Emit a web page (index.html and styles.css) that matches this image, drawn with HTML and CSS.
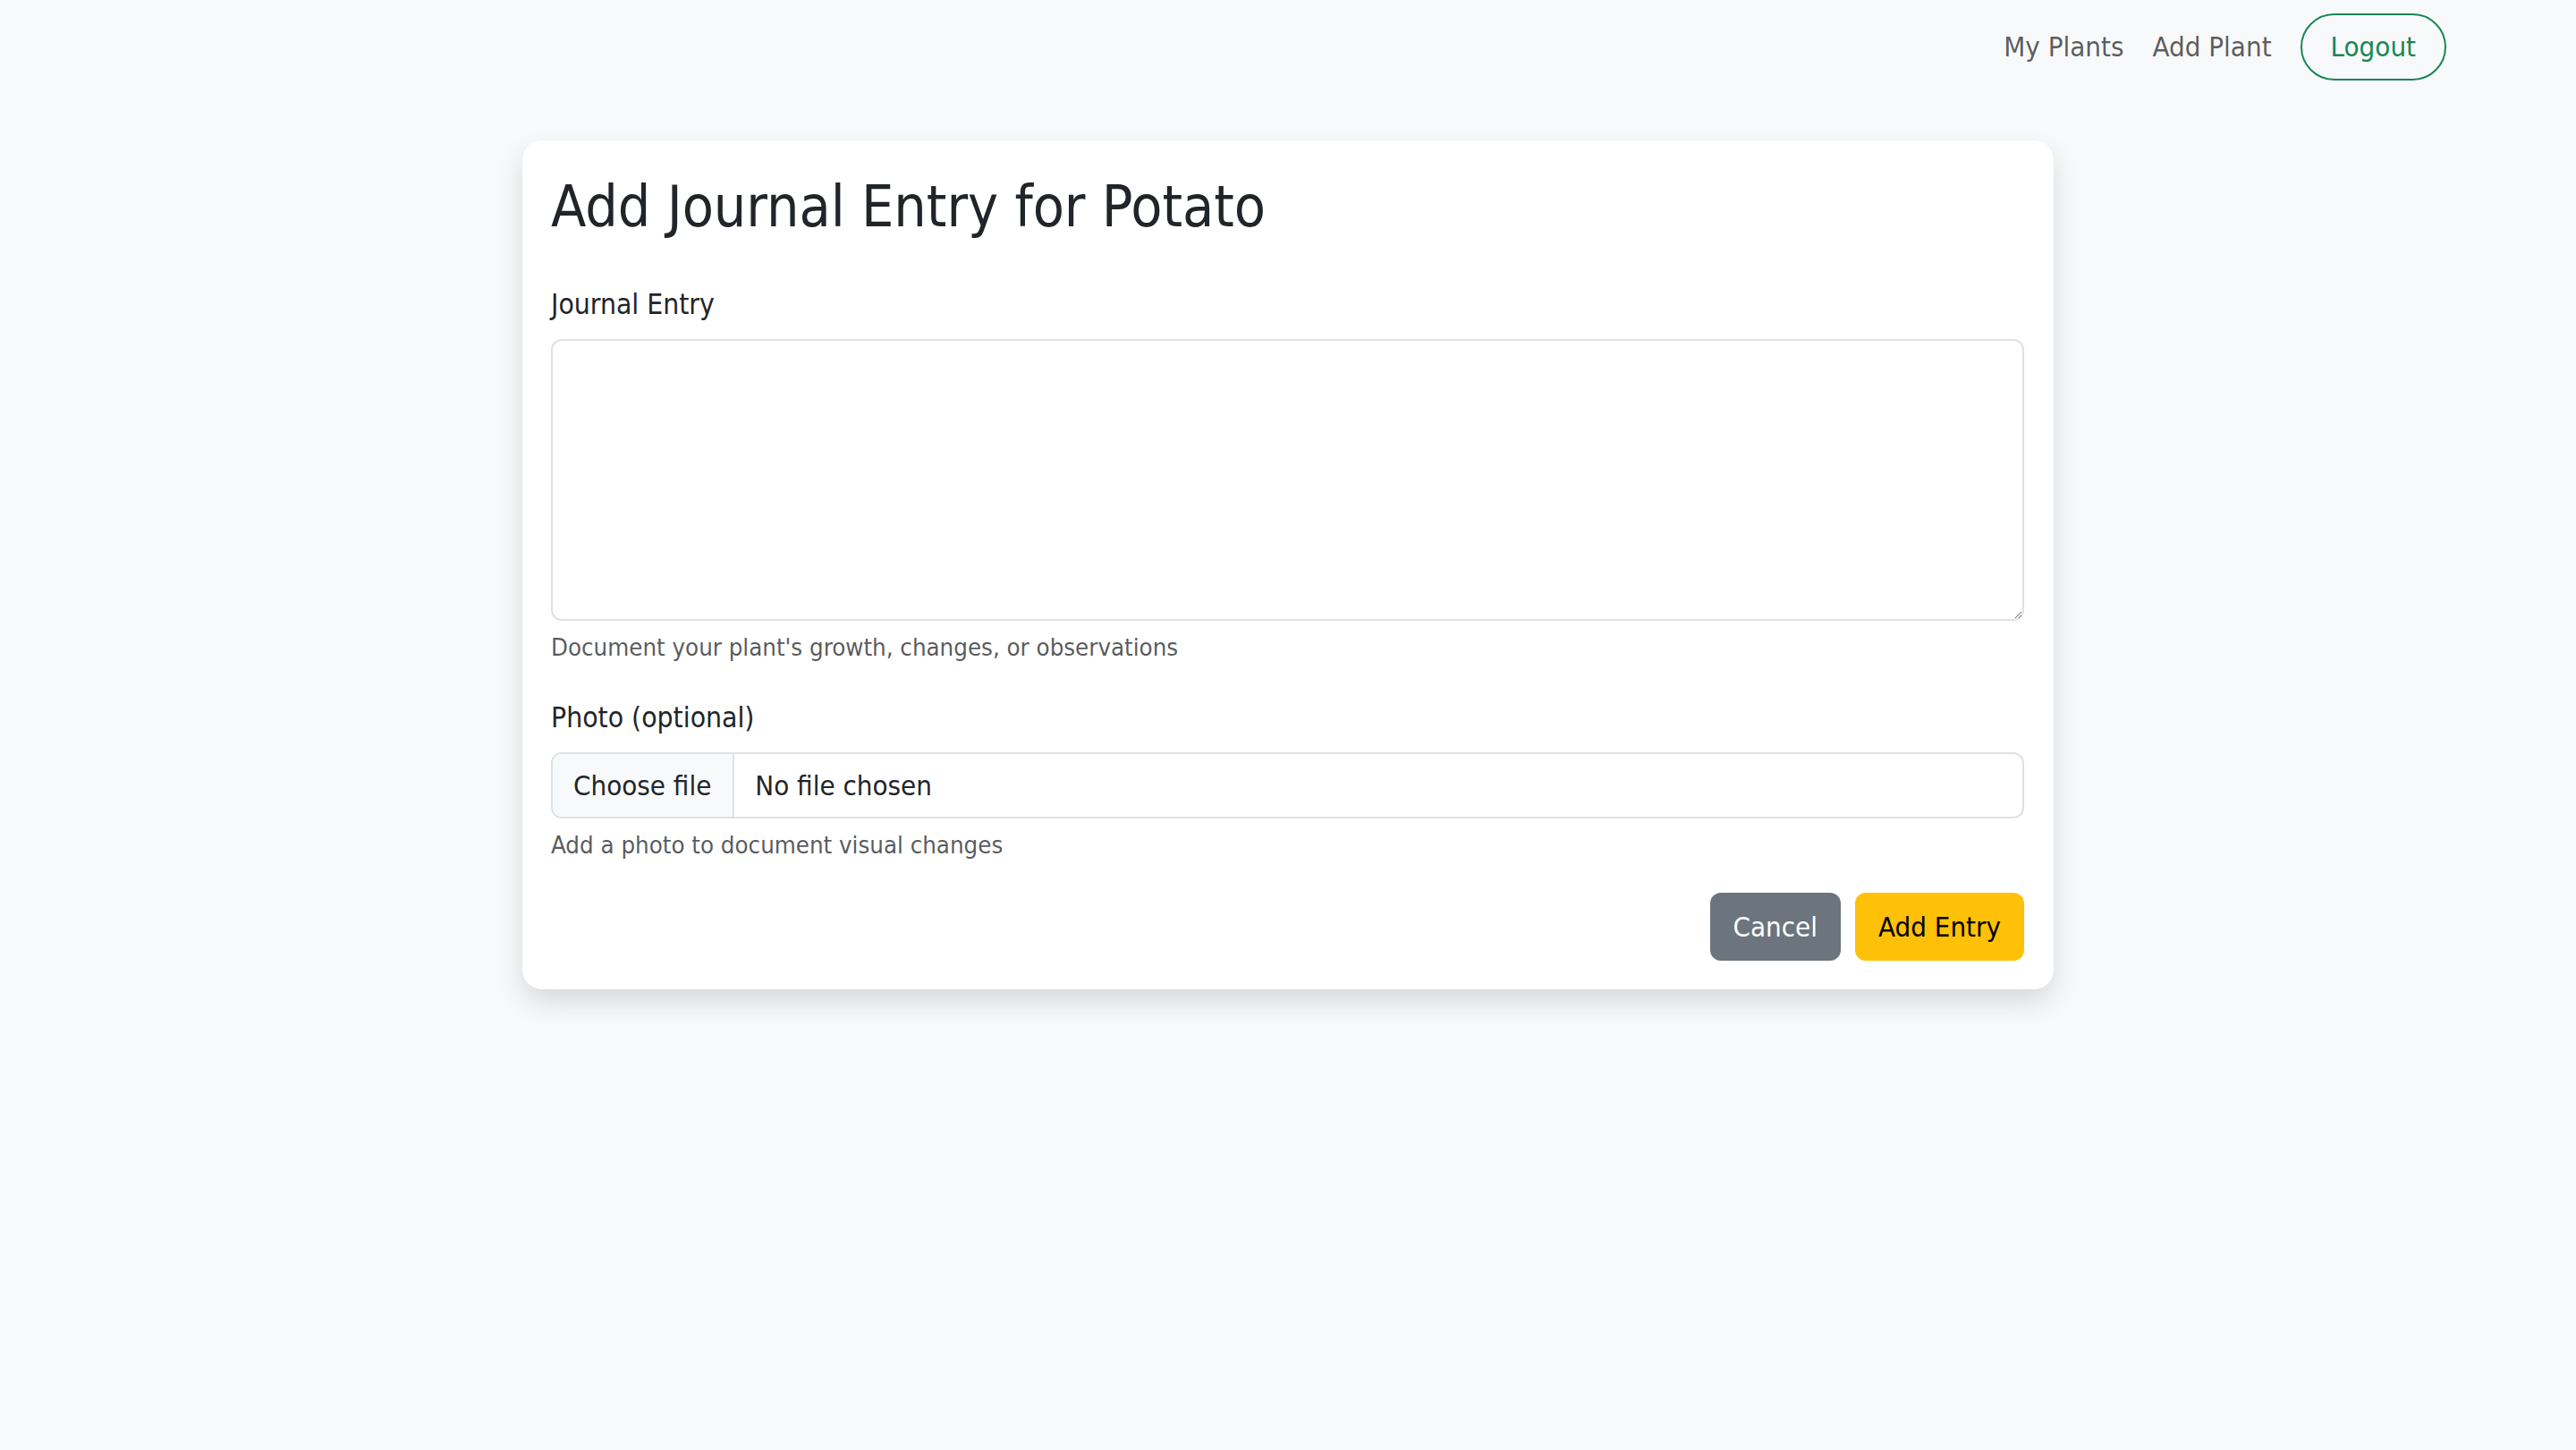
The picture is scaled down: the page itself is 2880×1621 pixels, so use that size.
FILE: index.html
```html
<!DOCTYPE html>
<html lang="en">
<head>
<meta charset="utf-8">
<title>Add Journal Entry</title>
<link rel="stylesheet" href="styles.css">
</head>
<body>
<header class="topnav">
  <a class="nav-link" href="#">My Plants</a>
  <a class="nav-link" href="#">Add Plant</a>
  <a class="btn-logout" href="#">Logout</a>
</header>
<main class="page">
  <section class="card">
    <h1 class="card-title">Add Journal Entry for Potato</h1>
    <form class="entry-form">
      <div class="field">
        <label class="field-label" for="entry">Journal Entry</label>
        <textarea class="field-textarea" id="entry"></textarea>
        <div class="field-help">Document your plant's growth, changes, or observations</div>
      </div>
      <div class="field">
        <div class="field-label">Photo (optional)</div>
        <label class="file-input">
          <span class="file-btn">Choose file</span>
          <span class="file-name">No file chosen</span>
          <input class="file-hidden" type="file">
        </label>
        <div class="field-help">Add a photo to document visual changes</div>
      </div>
      <div class="actions">
        <a class="btn btn-cancel" href="#">Cancel</a>
        <button class="btn btn-add" type="button">Add Entry</button>
      </div>
    </form>
  </section>
</main>
</body>
</html>
```

FILE: styles.css
```css
* {
  box-sizing: border-box;
}

html, body {
  margin: 0;
  padding: 0;
}

body {
  background: #f8f9fa;
  color: #212529;
  font-family: "DejaVu Sans Condensed", "DejaVu Sans", sans-serif;
  font-stretch: condensed;
  font-size: 31px;
  line-height: 1.5;
  min-height: 1621px;
}

.topnav {
  display: flex;
  justify-content: flex-end;
  align-items: center;
  gap: 32px;
  padding: 15px 145px 0 0;
}

.nav-link {
  color: rgba(0, 0, 0, 0.65);
  text-decoration: none;
  font-size: 31px;
}

.btn-logout {
  display: inline-block;
  height: 75px;
  line-height: 71px;
  padding: 0 32px;
  border: 2px solid #198754;
  border-radius: 40px;
  color: #198754;
  text-decoration: none;
  font-size: 31px;
}

.page {
  padding-top: 67px;
}

.card {
  width: 1712px;
  margin: 0 auto;
  background: #fff;
  border-radius: 22px;
  box-shadow: 0 14px 30px rgba(0, 0, 0, 0.13);
  padding: 36px 33px 32px 32px;
}

.card-title {
  margin: 0 0 47px;
  font-size: 64px;
  font-weight: 400;
  line-height: 1.2;
  color: #212529;
}

.field {
  margin-bottom: 34px;
}

.field-label {
  display: block;
  margin-bottom: 16px;
  font-size: 31.6px;
  line-height: 46.5px;
  color: #212529;
}

.field-textarea {
  display: block;
  width: 100%;
  height: 315px;
  margin: 0;
  padding: 12px 22px;
  border: 2px solid #dee2e6;
  border-radius: 12px;
  background: #fff;
  font: inherit;
  color: #212529;
  resize: vertical;
}

.field-help {
  margin-top: 10px;
  font-size: 27.4px;
  line-height: 40.5px;
  color: rgba(33, 37, 41, 0.75);
}

.file-input {
  display: flex;
  align-items: stretch;
  height: 74px;
  border: 2px solid #dee2e6;
  border-radius: 12px;
  overflow: hidden;
  background: #fff;
  cursor: pointer;
}

.file-btn {
  display: flex;
  align-items: center;
  padding: 0 24px 0 23px;
  background: #f8f9fa;
  border-right: 2px solid #dee2e6;
  color: #212529;
}

.file-name {
  display: flex;
  align-items: center;
  padding-left: 23px;
  color: #212529;
}

.file-hidden {
  display: none;
}

.actions {
  display: flex;
  justify-content: flex-end;
  gap: 16px;
  margin-top: -2px;
}

.btn {
  font: inherit;
  display: inline-flex;
  align-items: center;
  justify-content: center;
  height: 76px;
  padding: 0 26px;
  border: 0;
  border-radius: 12px;
  font-size: 31px;
  line-height: 1.5;
  text-decoration: none;
  cursor: pointer;
}

.btn-cancel {
  background: #6c757d;
  color: #fff;
}

.btn-add {
  background: #ffc107;
  color: #000;
}
```
